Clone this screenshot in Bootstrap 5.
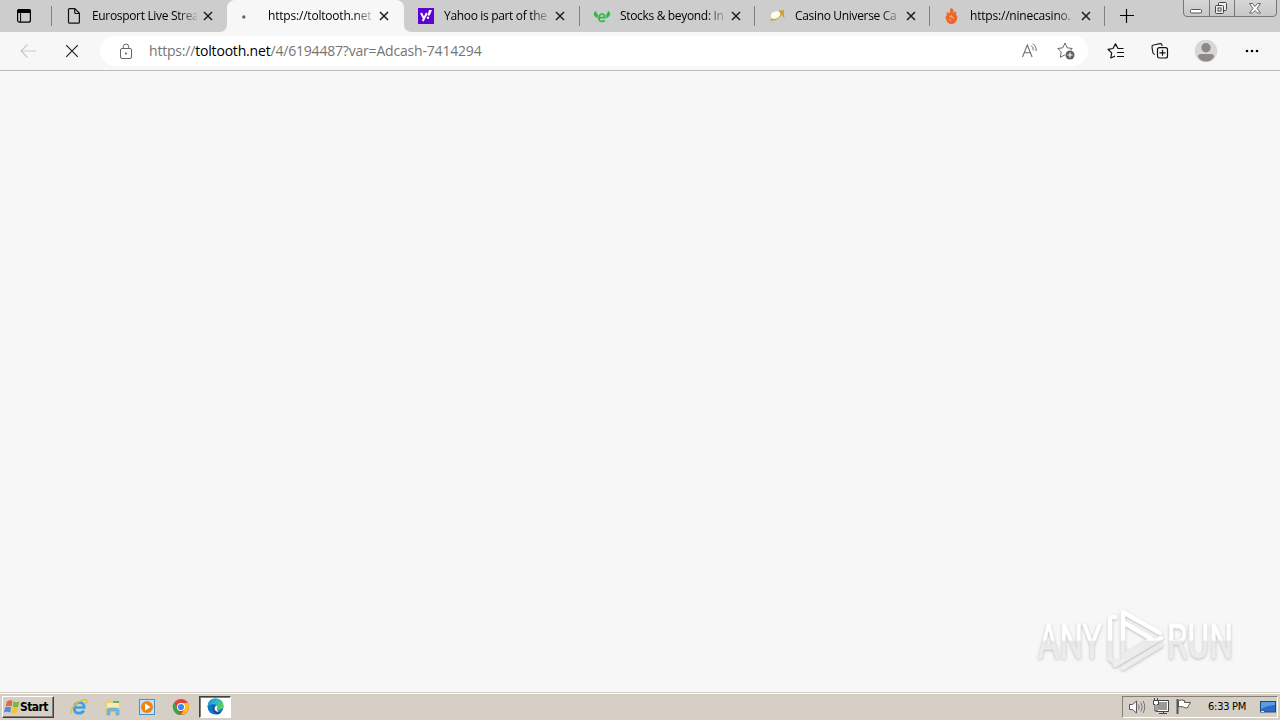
<!DOCTYPE html>
<html lang="en">
  <head>
    <meta charset="UTF-8" />
    <meta name="viewport" content="width=device-width, initial-scale=1.0" />
    <title>toltooth.net</title>
    <link
      href="https://cdn.jsdelivr.net/npm/bootstrap@5.3.0/dist/css/bootstrap.min.css"
      rel="stylesheet"
    />
    <style>
      body {
        height: 720px;
        background-color: #f7f7f7;
        font-family: "Open Sans", "Noto Sans", sans-serif;
        color: #000;
      }
      svg {
        display: block;
        flex: none;
      }

      /* Tab strip */
      .tab-strip {
        height: 32px;
        background-color: #cdcdcd;
      }
      .tab-menu {
        width: 52px;
        padding-left: 16px;
      }
      .browser-tab {
        width: 175px;
        height: 32px;
        padding-left: 14px;
        font-size: 12px;
        letter-spacing: -0.33px;
      }
      .divided::after {
        content: "";
        position: absolute;
        right: 0;
        top: 6px;
        width: 1px;
        height: 20px;
        background-color: #808080;
      }
      .browser-tab.divided::after {
        right: -1px;
      }
      .browser-tab.current {
        width: 177px;
        background-color: #f7f7f7;
        border-radius: 8px 8px 0 0;
      }
      /* the neighbours curve into the foot of the current tab */
      .before-current,
      .after-current {
        background: linear-gradient(#cdcdcd 50%, #f7f7f7 50%);
      }
      .tab-fill {
        position: absolute;
        inset: 0;
        background-color: #cdcdcd;
      }
      .before-current .tab-fill {
        border-bottom-right-radius: 7px;
      }
      .after-current .tab-fill {
        border-bottom-left-radius: 7px;
      }
      .tab-title {
        width: 105px;
        margin-left: 10px;
        margin-right: 6px;
        line-height: 18px;
        white-space: nowrap;
        -webkit-mask-image: linear-gradient(90deg, #000 82%, rgba(0, 0, 0, 0.15));
        mask-image: linear-gradient(90deg, #000 82%, rgba(0, 0, 0, 0.15));
      }
      .url-title {
        letter-spacing: -0.2px;
      }

      /* Window buttons */
      .window-buttons {
        right: 3px;
        top: -2px;
        height: 19px;
        border: 1px solid #777;
        border-radius: 0 0 4px 4px;
        background: linear-gradient(#d8d8d8, #c8c8c8);
      }
      .window-buttons > div {
        width: 25px;
      }
      .window-buttons > div + div {
        border-left: 1px solid #777;
      }
      .window-buttons > div:last-child {
        width: 42px;
      }

      /* Toolbar */
      .toolbar {
        height: 39px;
        background-color: #f7f7f7;
        border-bottom: 1px solid #bcbcbc;
      }
      .address-bar {
        width: 988px;
        height: 30px;
        padding-left: 18px;
        padding-right: 12px;
        border-radius: 15px;
        background-color: #fff;
      }
      .address-text {
        margin-left: 15px;
        font-size: 14px;
        line-height: 20px;
        letter-spacing: -0.19px;
        color: #757575;
        white-space: nowrap;
      }
      .address-text b {
        font-weight: 400;
        color: #000;
      }

      /* Watermark */
      .watermark {
        right: 40px;
        bottom: 19px;
      }

      /* Taskbar */
      .taskbar {
        height: 28px;
        padding-left: 2px;
        background-color: #d5cfc6;
        border-top: 1px solid #d5cfc6;
        box-shadow: inset 0 1px #fff;
      }
      .start-button {
        width: 52px;
        height: 22px;
        padding-left: 1px;
        border: 1px solid;
        border-color: #fff #404040 #404040 #fff;
        box-shadow: inset -1px -1px #848078;
        font: bold 12px/20px "DejaVu Sans Condensed", sans-serif;
        letter-spacing: -0.6px;
      }
      .task-button {
        width: 32px;
        height: 22px;
        border: 1px solid;
        border-color: #404040 #fff #fff #404040;
        background-color: #fff;
        box-shadow: inset 1px 1px #848078;
      }
      .tray {
        width: 156px;
        height: 22px;
        margin-right: 2px;
        border: 1px solid;
        border-color: #848078 #fff #fff #848078;
      }
      .clock {
        width: 42px;
        margin-left: 15px;
        font: 11px/20px "DejaVu Sans Condensed", sans-serif;
        letter-spacing: -0.25px;
        white-space: nowrap;
      }
    </style>
  </head>
  <body class="d-flex flex-column overflow-hidden">
    <!-- reusable close cross -->
    <svg width="0" height="0" class="position-absolute">
      <symbol id="cross" viewBox="0 0 10 10">
        <path d="M1 1l8 8M9 1L1 9" stroke="#222" stroke-width="1.6" />
      </symbol>
    </svg>

    <div class="tab-strip d-flex position-relative">
      <div class="tab-menu d-flex align-items-center position-relative divided">
        <svg width="16" height="16" viewBox="0 0 16 16">
          <rect x="1.6" y="1.6" width="12.8" height="12.6" rx="2" fill="none" stroke="#000" stroke-width="1.2" />
          <path d="M1 5V3q0-2 2-2h10q2 0 2 2v2z" />
          <path d="M4.6 5v9" stroke="#000" />
        </svg>
      </div>

      <div class="browser-tab before-current position-relative">
        <div class="tab-fill"></div>
        <div class="d-flex align-items-center h-100 position-relative">
          <svg width="16" height="16" viewBox="0 0 16 16">
            <path d="M3.5.7h5.300L13.400 5.300v8.900q0 1-1 1H3.500q-1 0-1-1V1.700q0-1 1-1zM8.700.9v3.600q0 1 1 1h3.500" fill="none" stroke="#111" stroke-width="1.200" />
          </svg>
          <div class="tab-title">Eurosport Live Strea</div>
          <svg width="10" height="10"><use href="#cross" /></svg>
        </div>
      </div>

      <div class="browser-tab current d-flex align-items-center">
        <svg width="16" height="16"><circle cx="2.800" cy="9" r="1.700" fill="#666" /></svg>
        <div class="tab-title url-title" style="margin-left: 11px">https://toltooth.net</div>
        <svg width="10" height="10"><use href="#cross" /></svg>
      </div>

      <div class="browser-tab after-current position-relative divided">
        <div class="tab-fill"></div>
        <div class="d-flex align-items-center h-100 position-relative">
          <svg width="16" height="16" viewBox="0 0 16 16">
            <path d="M0 0h16v16H0z" fill="#5f01d1" />
            <path d="M3 5l2.700 5M8.800 5l-4 8" stroke="#fff" stroke-width="2" fill="none" />
            <path d="M11 2h3l-2.300 5.500H9.500z" fill="#fff" />
            <circle cx="10" cy="9.800" r="1.200" fill="#fff" />
          </svg>
          <div class="tab-title">Yahoo is part of the</div>
          <svg width="10" height="10"><use href="#cross" /></svg>
        </div>
      </div>

      <div class="browser-tab d-flex align-items-center position-relative divided">
        <svg width="18" height="16" viewBox="0 0 18 16" style="margin-right: -1px">
          <path d="M3 2.500Q-.5 5 1.500 8l3 2.500.5-4Q3 5.500 3 2.500zM15 2.500q3.500 2.500 1.500 5.500l-3 2.500-.5-4q2-1 2-4z" fill="#2dbb45" />
          <path d="M6.200 9.600h5.600Q11.800 6 9 6T6 9.700 9 13.300q1.700 0 2.700-1" fill="none" stroke="#2dbb45" stroke-width="1.700" />
        </svg>
        <div class="tab-title">Stocks &amp; beyond: In</div>
        <svg width="10" height="10"><use href="#cross" /></svg>
      </div>

      <div class="browser-tab d-flex align-items-center position-relative divided">
        <svg width="18" height="16" viewBox="0 0 18 16" style="margin-right: -1px">
          <path d="M2.500 11.500Q6 12.500 9.500 10T14 4.500L11 3.500l4-.3.300 4.300-1-1.500" fill="none" stroke="#d4a02c" stroke-width="1.800" />
          <ellipse cx="7.500" cy="7" rx="5" ry="3.500" transform="rotate(-25 7.500 7)" fill="#fffdf0" />
        </svg>
        <div class="tab-title">Casino Universe Ca</div>
        <svg width="10" height="10"><use href="#cross" /></svg>
      </div>

      <div class="browser-tab d-flex align-items-center position-relative divided">
        <svg width="17" height="16" viewBox="0 0 17 16">
          <path d="M8 0q4 2 2 5 2-1 2-2 2 2 1 4 2 1 1 4-1 5-5.500 5T3 11Q2 8 4 7 3 5 4 4q1 1 3 1-1-3 1-5z" fill="#ed6726" />
          <path d="M6 8l3 1.500M8 7l3 4M6 11l2 2" stroke="#f9c19f" stroke-width=".8" fill="none" />
        </svg>
        <div class="tab-title url-title">https://ninecasino.</div>
        <svg width="10" height="10"><use href="#cross" /></svg>
      </div>

      <svg width="14" height="14" viewBox="0 0 14 14" style="margin: 9px 0 0 16px">
        <path d="M6.500 0v14M0 6.500h14" stroke="#000" stroke-width="1.200" />
      </svg>

      <div class="window-buttons position-absolute d-flex">
        <div>
          <svg width="25" height="17"><rect x="6.500" y="10.500" width="11" height="3.500" rx="1" fill="#fff" stroke="#555" /></svg>
        </div>
        <div>
          <svg width="24" height="17">
            <rect x="8.500" y="3.500" width="8" height="8" rx="1" fill="#eee" stroke="#444" />
            <rect x="5.500" y="6.500" width="8" height="8" rx="1" fill="#eee" stroke="#444" />
            <rect x="8" y="9" width="3" height="3" fill="#fff" stroke="#444" />
          </svg>
        </div>
        <div>
          <svg width="41" height="17">
            <path d="M14.500 4.500h3l2.500 3 2.500-3h3l-3.500 5 3.500 4.500h-3L20 11.500 17.500 14h-3l3.500-4.500z" fill="#fff" stroke="#666" />
          </svg>
        </div>
      </div>
    </div>

    <div class="toolbar d-flex align-items-center">
      <svg width="16" height="14" viewBox="0 0 16 14" style="margin-left: 20px">
        <path d="M16 7H1M7.500.5L1 7l6.500 6.500" fill="none" stroke="#c9c9c9" stroke-width="1.200" />
      </svg>
      <svg width="14" height="14" viewBox="0 0 14 14" style="margin-left: 29px">
        <path d="M1.200 1.200l11.600 11.600M12.800 1.200L1.200 12.800" stroke="#222" stroke-width="1.200" />
      </svg>
      <div class="address-bar d-flex align-items-center" style="margin-left: 21px">
        <svg width="16" height="17" viewBox="0 0 16 17">
          <rect x="2.500" y="5.500" width="11" height="10" rx="1.500" fill="none" stroke="#666" />
          <path d="M5.300 5.500V3.800q0-2.800 2.700-2.800t2.700 2.800v1.700" fill="none" stroke="#666" />
          <circle cx="8" cy="10.500" r="1" fill="#555" />
        </svg>
        <div class="address-text">https://<b>toltooth.net</b>/4/6194487?var=Adcash-7414294</div>
        <svg width="18" height="16" viewBox="0 0 18 16" class="ms-auto">
          <path d="M1.500 14L6.300 2l4.800 12M3.300 9.800h6.200" fill="none" stroke="#707070" stroke-width="1.100" />
          <path d="M10 2.500q2.500 1.500 2.300 5M12 .6q3.600 2.400 3.300 7.500" fill="none" stroke="#707070" />
        </svg>
        <svg width="19" height="18" viewBox="0 0 19 18" style="margin-left: 18px">
          <path d="M8 1l2.200 4.800 5 .7-3.700 3.700.8 5L8 12.800l-4.700 2.500.9-5.300L.8 6.500l5-.7z" fill="none" stroke="#666" stroke-linejoin="round" />
          <circle cx="13" cy="13" r="5" fill="#fff" />
          <circle cx="13" cy="13" r="4.500" fill="#606060" />
          <path d="M13 10.500v5M10.500 13h5" stroke="#fff" stroke-width="1.100" />
        </svg>
      </div>
      <svg width="18" height="16" viewBox="0 0 18 16" style="margin-left: 19px">
        <path d="M16.500 5.500H11L8.500.8 6 5.500l-5 .8 3.700 3.600-.9 5.100L8.200 13M10 9.500h7M10 13.500h7" fill="none" stroke="#111" stroke-width="1.200" stroke-linejoin="round" />
      </svg>
      <svg width="18" height="18" viewBox="0 0 18 18" style="margin-left: 26px">
        <path d="M4 12.500Q2 12 1.800 10.500L1 5q-.2-1.700 1.500-2L9 1.700q1.500-.2 1.800 1l.4 1.500" fill="none" stroke="#222" stroke-width="1.200" />
        <rect x="6.500" y="5.600" width="10" height="10.400" rx="2" fill="#f7f7f7" stroke="#111" stroke-width="1.200" />
        <path d="M11.500 7.800v6M8.500 10.800h6" stroke="#111" stroke-width="1.200" />
      </svg>
      <svg width="24" height="24" viewBox="0 0 24 24" style="margin-left: 25px">
        <circle cx="12" cy="12" r="11.300" fill="#d9d7d5" />
        <circle cx="12" cy="8.700" r="4.700" fill="#8c8987" />
        <path d="M4 18q0-3 3-3h10q3 0 3 3-3 4.500-8 4.500T4 18z" fill="#8c8987" />
      </svg>
      <svg width="14" height="4" viewBox="0 0 14 4" style="margin-left: 27px">
        <circle cx="2" cy="2" r="1.300" /><circle cx="7" cy="2" r="1.300" /><circle cx="12" cy="2" r="1.300" />
      </svg>
    </div>

    <!-- Blank page, still loading -->
    <main class="flex-grow-1 position-relative">
      <svg class="watermark position-absolute" width="206" height="66" viewBox="0 0 206 66">
        <defs>
          <linearGradient id="fade" x1="0" y1="0" x2="0" y2="66" gradientUnits="userSpaceOnUse">
            <stop offset=".5" stop-color="#fff" />
            <stop offset=".52" stop-color="#e9e9e9" />
            <stop offset="1" stop-color="#f0f0f0" />
          </linearGradient>
          <filter id="soft" x="-10%" y="-10%" width="120%" height="120%">
            <feDropShadow dx="0" dy="1" stdDeviation="1.400" flood-color="#999" flood-opacity=".65" />
          </filter>
        </defs>
        <g filter="url(#soft)" fill="url(#fade)" font-family="Roboto, sans-serif" font-size="49">
          <g stroke="url(#fade)" stroke-width=".8">
            <text x="4" y="51" textLength="64" lengthAdjust="spacingAndGlyphs">ANY</text>
            <text x="133" y="51" textLength="66" lengthAdjust="spacingAndGlyphs">RUN</text>
          </g>
          <g fill="none" stroke="url(#fade)" stroke-width="4.500" stroke-linecap="round" stroke-linejoin="round">
            <path d="M81 10q-5-1-5 3v39l6 4M89 48V5l37 21M89 15v33M89 15l29 17-29 17M127 31L81 58M89 61l38-23" />
          </g>
        </g>
      </svg>
    </main>

    <div class="taskbar d-flex align-items-center">
      <div class="start-button d-flex align-items-center">
        <svg width="16" height="16" viewBox="0 0 16 16">
          <path d="M3 2.500q3-2 5.500-.5L7.500 7.500Q5 6 1.500 7.500z" fill="#e9663a" />
          <path d="M9.500 2.500q3 1.500 6 0L14 8q-3 1-5.500-.5z" fill="#78b83d" />
          <path d="M1.200 8.500q3-1.500 6 0l-1 5Q3 12 0 13.500z" fill="#4b8fdc" />
          <path d="M8.300 8.500q3 1.500 5.700.3l-1 5q-3 1.500-5.700-.3z" fill="#f5c334" />
        </svg>
        <span>Start</span>
      </div>
      <svg width="18" height="18" viewBox="0 0 18 18" style="margin-left: 16px">
        <path d="M4.500 9.500h9.700Q14 4.500 9.300 4.500T4.300 10t5 5.200q3 0 4.500-2.700" fill="none" stroke="#3ba1e4" stroke-width="2.700" />
        <path d="M2 16Q-1 14 4 8T15.500 1.500Q18 2 16 6" fill="none" stroke="#e8bb3c" stroke-width="1.300" />
      </svg>
      <svg width="18" height="18" viewBox="0 0 18 18" style="margin-left: 16px">
        <path d="M1.500 2.500h5l1 1.500h8V15h-14z" fill="#e8ce74" />
        <path d="M3 5h12v8H3z" fill="#f9eca9" />
        <path d="M9 3h6v2H9z" fill="#63b45b" />
        <path d="M3 17v-5q0-2 2-2h8q2 0 2 2v5h-3v-4H6v4z" fill="#75b7df" stroke="#5c9cc4" stroke-width=".5" />
      </svg>
      <svg width="18" height="18" viewBox="0 0 18 18" style="margin-left: 16px">
        <rect x="1.500" y="1.500" width="15" height="15" fill="#c7e2f5" stroke="#4d8fc5" />
        <circle cx="9" cy="9" r="6" fill="#ee8419" />
        <path d="M7 5.500L12.500 9 7 12.500z" fill="#fff" />
      </svg>
      <svg width="18" height="18" viewBox="0 0 18 18" style="margin-left: 16px">
        <circle cx="9" cy="9" r="8" fill="#e54335" />
        <path d="M2.200 5l4 7L9 17Q3.500 17 1.500 12T2.200 5z" fill="#34a552" />
        <path d="M9 5h7q2 4 0 7.500T9 17l3.500-6z" fill="#fbc116" />
        <circle cx="9" cy="9" r="4" fill="#fff" />
        <circle cx="9" cy="9" r="3.100" fill="#4285f4" />
      </svg>
      <div class="task-button d-flex align-items-center justify-content-center" style="margin-left: 9px">
        <svg width="17" height="17" viewBox="0 0 17 17">
          <defs>
            <linearGradient id="wave" x2="1" y2=".5">
              <stop stop-color="#1c8fd8" />
              <stop offset=".5" stop-color="#27b6ce" />
              <stop offset="1" stop-color="#5ccf55" />
            </linearGradient>
          </defs>
          <circle cx="8.500" cy="8.500" r="8" fill="#1673c4" />
          <path d="M10 12q-1-1 0-2.500Q10.500 6 6.500 6 2 6 .5 9 .7.500 8.500.5q8 .5 8 7.500 0 4-6.500 4z" fill="url(#wave)" />
          <path d="M7.500 8.500q-2 5 3 6.300 3 .5 5.500-2.500l1 1-3 3.700" fill="#fff" />
          <path d="M9.500 7.500q1.500 1 .5 2.500-.8 1 .5 2-2 0-2.500-2 0-2 1.500-2.500z" fill="#fff" />
          <path d="M6 7.500q-2 6.500 4 9 3 0 5-3.500-2.500 1.500-5.300.5Q6.500 12 8 8z" fill="#154c9e" />
        </svg>
      </div>
      <div class="tray d-flex align-items-center ms-auto">
        <svg width="18" height="16" viewBox="0 0 18 16" style="margin-left: 5px">
          <path d="M1.500 5.500h3L8.500 2v12l-4-3.500h-3z" fill="#fff" stroke="#555" />
          <path d="M10.500 5.500q1.500 2.500 0 5M12.800 3.500q3 4.500 0 9M15 2q3.500 6 0 12" fill="none" stroke="#777" />
        </svg>
        <svg width="18" height="17" viewBox="0 0 18 17" style="margin-left: 6px">
          <path d="M5.500 3.500h10v9h-10z" fill="#999" stroke="#fff" />
          <path d="M5 2.500h11.500v11H4.500M7 15.500h8M11.500 13.500v2" fill="none" stroke="#444" />
          <path d="M1.500 2.500h5v4H5v6.500H3V6.500H1.500z" fill="#fff" stroke="#444" />
          <path d="M2.500 0v3M5.500 0v3" stroke="#444" />
        </svg>
        <svg width="18" height="17" viewBox="0 0 18 17" style="margin-left: 5px">
          <path d="M2.500 1v15" stroke="#555" stroke-width="2" />
          <path d="M3.500 2.500q3-1 6 0v2h6l-2 3-1 2.500q-2 .5-4-1-3-1-5 0z" fill="#fff" stroke="#555" />
        </svg>
        <div class="clock">6:33 PM</div>
        <svg width="16" height="14" viewBox="0 0 16 14" style="margin-left: 10px">
          <rect x=".5" y="1.500" width="15" height="10.500" fill="#2e6bc6" stroke="#224879" />
          <path d="M1 2h14v3Q7 5 1 9z" fill="#5c9ce5" />
          <path d="M1 11.500h3" stroke="#cfe5ff" />
        </svg>
      </div>
    </div>

    <script src="https://cdn.jsdelivr.net/npm/bootstrap@5.3.0/dist/js/bootstrap.bundle.min.js"></script>
  </body>
</html>
